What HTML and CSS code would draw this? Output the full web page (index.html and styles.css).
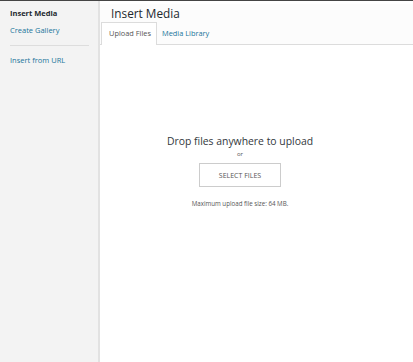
FILE: index.html
```html
<!DOCTYPE html>
<html>
<head>
<meta charset="utf-8">
<link rel="stylesheet" href="styles.css">
</head>
<body>
<div class="frame">
  <aside class="menu">
    <div class="menu-item active">Insert Media</div>
    <a class="menu-item">Create Gallery</a>
    <div class="sep"></div>
    <a class="menu-item">Insert from URL</a>
  </aside>
  <main class="content">
    <header class="head">
      <h1 class="title">Insert Media</h1>
      <nav class="tabs">
        <span class="tab current">Upload Files</span>
        <a class="tab">Media Library</a>
      </nav>
    </header>
    <section class="uploader">
      <div class="drop">Drop files anywhere to upload</div>
      <div class="or">or</div>
      <button class="select">SELECT FILES</button>
      <div class="max">Maximum upload file size: 64 MB.</div>
    </section>
  </main>
</div>
</body>
</html>
```

FILE: styles.css
```css
html, body {
  margin: 0;
  padding: 0;
  height: 100%;
}
body {
  font-family: "Open Sans", "Noto Sans", sans-serif;
  color: #444;
  background: #fff;
  border-top: 1px solid #444;
  box-sizing: border-box;
}
.frame {
  display: flex;
  height: 361px;
}
.menu {
  width: 100px;
  flex: none;
  background: #f3f3f3;
  border-right: 2px solid #e2e2e2;
  padding-top: 7px;
  box-sizing: border-box;
  display: flex;
  flex-direction: column;
}
.menu-item {
  display: block;
  font-size: 7.5px;
  line-height: 11px;
  padding: 0 0 0 10px;
  margin-bottom: 6px;
  color: #21759b;
}
.menu-item.active {
  color: #23282d;
  font-weight: 700;
}
.sep {
  height: 1px;
  background: #ddd;
  margin: 3px 9px 9px 10px;
}
.content {
  flex: 1;
  display: flex;
  flex-direction: column;
}
.head {
  background: #fcfcfc;
  border-bottom: 1px solid #dcdcdc;
  margin-top: 3px;
  padding-left: 1px;
}
.title {
  margin: 0;
  font-size: 11.8px;
  font-weight: 400;
  color: #23282d;
  line-height: 16px;
  padding: 1px 0 0 10px;
}
.tabs {
  display: flex;
  margin-top: 1px;
  height: 22px;
}
.tab {
  font-size: 7.4px;
  line-height: 21px;
  padding: 0 5px 0 4px;
  color: #21759b;
  border: 1px solid transparent;
  border-bottom: none;
}
.tab.current {
  color: #555;
  background: #fff;
  border-color: #dcdcdc;
  margin-bottom: -1px;
  height: 23px;
  box-sizing: border-box;
  padding: 0 5px 0 7px;
}
.uploader {
  display: flex;
  flex-direction: column;
  align-items: center;
  padding-top: 89px;
  padding-right: 33px;
}
.drop {
  font-size: 10.4px;
  line-height: 14px;
  color: #32373c;
}
.or {
  font-size: 6px;
  line-height: 8px;
  margin-top: 2px;
  color: #555;
}
.select {
  margin-top: 5px;
  width: 82px;
  height: 24px;
  background: #fff;
  border: 1px solid #ccc;
  font-family: "Open Sans", "Noto Sans", sans-serif;
  font-size: 7px;
  color: #555;
  padding: 0;
}
.max {
  margin-top: 12px;
  font-size: 6.2px;
  color: #555;
}
```
